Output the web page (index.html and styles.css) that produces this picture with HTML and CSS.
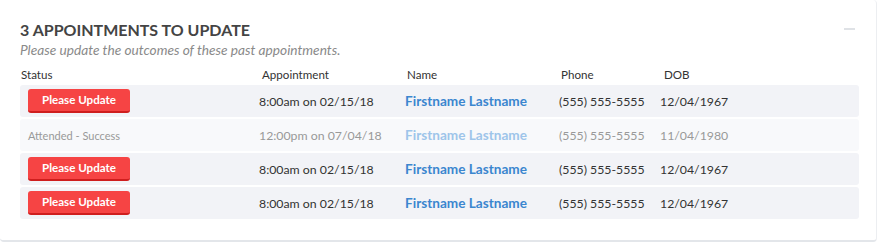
FILE: index.html
```html
<!DOCTYPE html>
<html>
<head>
<meta charset="utf-8">
<link rel="stylesheet" href="styles.css">
</head>
<body>
<div class="card">
  <div class="card-head">
    <div>
      <h2 class="title">3 APPOINTMENTS TO UPDATE</h2>
      <p class="subtitle">Please update the outcomes of these past appointments.</p>
    </div>
    <span class="collapse"></span>
  </div>
  <div class="table">
    <div class="thead">
      <div class="th th-status">Status</div>
      <div class="th">Appointment</div>
      <div class="th">Name</div>
      <div class="th">Phone</div>
      <div class="th">DOB</div>
    </div>
    <div class="row">
      <div class="cell status"><button class="btn">Please Update</button></div>
      <div class="cell">8:00am on 02/15/18</div>
      <div class="cell name">Firstname Lastname</div>
      <div class="cell">(555) 555-5555</div>
      <div class="cell">12/04/1967</div>
    </div>
    <div class="row done">
      <div class="cell status small">Attended - Success</div>
      <div class="cell">12:00pm on 07/04/18</div>
      <div class="cell name">Firstname Lastname</div>
      <div class="cell">(555) 555-5555</div>
      <div class="cell">11/04/1980</div>
    </div>
    <div class="row">
      <div class="cell status"><button class="btn">Please Update</button></div>
      <div class="cell">8:00am on 02/15/18</div>
      <div class="cell name">Firstname Lastname</div>
      <div class="cell">(555) 555-5555</div>
      <div class="cell">12/04/1967</div>
    </div>
    <div class="row">
      <div class="cell status"><button class="btn">Please Update</button></div>
      <div class="cell">8:00am on 02/15/18</div>
      <div class="cell name">Firstname Lastname</div>
      <div class="cell">(555) 555-5555</div>
      <div class="cell">12/04/1967</div>
    </div>
  </div>
</div>
</body>
</html>
```

FILE: styles.css
```css
* { box-sizing: border-box; }
html, body { margin: 0; padding: 0; background: #fff; }
body { font-family: Lato, "Open Sans", sans-serif; color: #333; }

.card {
  width: 877px;
  height: 242px;
  background: #fff;
  border-radius: 4px;
  border-bottom: 2px solid #e3e6ea;
  border-right: 1px solid #eceef1;
  padding: 19px 17px 0 20px;
}

.card-head {
  display: flex;
  justify-content: space-between;
  align-items: flex-start;
}

.title {
  margin: 0;
  font-size: 16px;
  font-weight: 700;
  color: #444;
  line-height: 22px;
}

.subtitle {
  margin: 0;
  font-size: 13.7px;
  font-style: italic;
  color: #8a8a8a;
  line-height: 17px;
}

.collapse {
  width: 11px;
  height: 2px;
  background: #dfe2e6;
  margin: 9px 4px 0 0;
}

.table { margin-top: 6px; }

.thead, .row {
  display: grid;
  grid-template-columns: 239px 146px 154px 101px 1fr;
  align-items: center;
}

.thead { height: 21px; }
.th {
  font-size: 11.6px;
  color: #333;
  padding-left: 3px;
  line-height: 16px;
}
.thead .th:nth-child(3) { padding-left: 2px; }
.thead .th:nth-child(4) { padding-left: 2px; }
.thead .th:nth-child(5) { padding-left: 4px; }
.th-status { padding-left: 1px; }

.row {
  height: 32px;
  margin-top: 2px;
  background: #f2f3f7;
  border-radius: 3px;
  font-size: 12.3px;
}
.thead + .row { margin-top: 0; }

.cell { white-space: nowrap; }
.status { padding-left: 8px; }
.name { color: #3b86cf; font-weight: 700; font-size: 13.6px; }

.btn {
  display: block;
  width: 102px;
  height: 24px;
  background: #f64444;
  color: #fff;
  border: 0;
  border-bottom: 2px solid #cf1e1e;
  border-radius: 3px;
  font-family: inherit;
  font-size: 11.6px;
  font-weight: 700;
  padding: 0 0 1px;
  margin: 0;
}

.row.done { background: #f8f9fb; color: #999; }
.row.done .name { color: #9ec5ea; }
.small { font-size: 11px; color: #999; }
```
